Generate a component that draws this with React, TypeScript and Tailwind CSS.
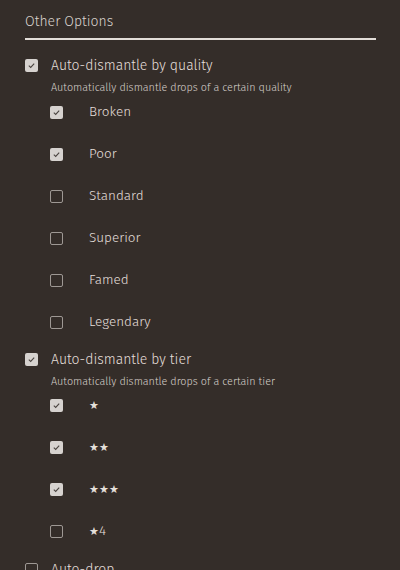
import React from "react";

type Row = { label: React.ReactNode; checked: boolean };

const font = { fontFamily: '"Fira Sans", "Noto Sans", "Open Sans", sans-serif' };

function Box({ checked }: { checked: boolean }) {
  if (checked) {
    return (
      <span className="flex h-[13px] w-[13px] shrink-0 items-center justify-center rounded-[2px] bg-[#d6d2cf]">
        <svg width="9" height="9" viewBox="0 0 10 10">
          <path d="M2 5.2 L4.1 7.2 L8 2.8" fill="none" stroke="#4a4440" strokeWidth="1.2" />
        </svg>
      </span>
    );
  }
  return <span className="block h-[13px] w-[13px] shrink-0 rounded-[2px] border border-[#9e9894]" />;
}

function SubRow({ row }: { row: Row }) {
  return (
    <div className="flex h-[42px] items-center">
      <div className="w-[39px]">
        <Box checked={row.checked} />
      </div>
      <span className="text-[13.5px] font-light text-[#e4dfda]">{row.label}</span>
    </div>
  );
}

function Group({ title, desc, rows, first }: { title: string; desc: string; rows: Row[]; first?: boolean }) {
  return (
    <div className={first ? "" : "mt-[3px]"}>
      <div className="flex h-[26px] items-center gap-[13px]">
        <Box checked />
        <span className="text-[14px] font-light text-[#e4dfda]">{title}</span>
      </div>
      <div className="pl-[26px] pt-[2px] text-[10.8px] font-light text-[#d6d0ca]">{desc}</div>
      <div className={first ? "-mt-[5px] pl-[25px]" : "-mt-[6px] pl-[25px]"}>
        {rows.map((r, i) => (
          <SubRow key={i} row={r} />
        ))}
      </div>
    </div>
  );
}

const star = "\u2605";

export default function App() {
  const quality: Row[] = [
    { label: "Broken", checked: true },
    { label: "Poor", checked: true },
    { label: "Standard", checked: false },
    { label: "Superior", checked: false },
    { label: "Famed", checked: false },
    { label: "Legendary", checked: false },
  ];
  const tier: Row[] = [
    { label: <span className="text-[11px]">{star}</span>, checked: true },
    { label: <span className="text-[11px]">{star + star}</span>, checked: true },
    { label: <span className="text-[11px]">{star + star + star}</span>, checked: true },
    { label: <span><span className="text-[11px]">{star}</span>4</span>, checked: false },
  ];
  return (
    <div className="h-[570px] w-[400px] overflow-hidden bg-[#342d29] px-[25px]" style={font}>
      <div className="pt-[11px] text-[14px] font-light text-[#d9d3cd]">Other Options</div>
      <div className="mt-[6px] h-[2px] w-[351px] bg-[#e2ddd8]" />
      <div className="pt-[12px]">
        <Group first title="Auto-dismantle by quality" desc="Automatically dismantle drops of a certain quality" rows={quality} />
        <Group title="Auto-dismantle by tier" desc="Automatically dismantle drops of a certain tier" rows={tier} />
        <div className="mt-[4px] flex h-[26px] items-center gap-[13px]">
          <Box checked={false} />
          <span className="text-[14px] font-light text-[#e4dfda]">Auto-drop</span>
        </div>
      </div>
    </div>
  );
}
